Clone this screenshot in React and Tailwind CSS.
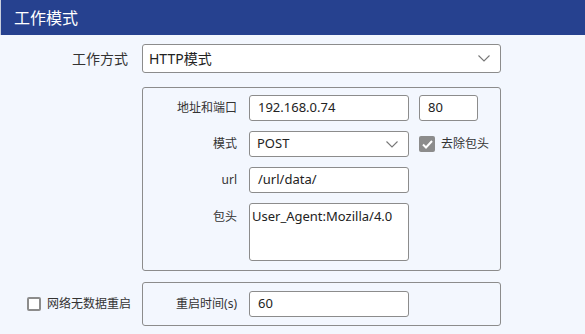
import React from 'react';

const Chevron = () => (
  <svg width="12" height="7" viewBox="0 0 12 7" fill="none" className="shrink-0">
    <path d="M0.5 0.5 L6 6 L11.5 0.5" stroke="#777" strokeWidth="1.1" />
  </svg>
);

const Field = ({ value, className = '' }) => (
  <div className={`flex items-center h-[26px] bg-white border border-[#8c8c8c] rounded-[3px] pl-[8px] text-[13px] text-[#222] ${className}`}>
    {value}
  </div>
);

const Select = ({ value }) => (
  <div className="flex items-center justify-between h-[26px] w-[160px] bg-white border border-[#8c8c8c] rounded-[3px] pl-[7px] pr-[10px] text-[13px] text-[#222]">
    <span>{value}</span>
    <Chevron />
  </div>
);

const Row = ({ label, children, top = false }) => (
  <div className={`flex ${top ? 'items-start' : 'items-center'}`}>
    <div className={`w-[94px] text-right text-[12px] text-[#333] ${top ? 'pt-[5px]' : ''}`}>{label}</div>
    <div className="ml-[12px] flex items-center gap-[10px]">{children}</div>
  </div>
);

export default function App() {
  return (
    <div
      className="w-[585px] h-[334px] bg-[#f3f7fe] overflow-hidden"
      style={{ fontFamily: '"Noto Sans", "Noto Sans CJK SC", sans-serif' }}
    >
      {/* Header */}
      <div className="h-[35px] bg-[#26418f] border-l border-[#c8cede] flex items-center pl-[13px] text-white text-[16px]">
        工作模式
      </div>

      {/* 工作方式 */}
      <div className="flex items-center mt-[9px]">
        <div className="w-[128px] text-right text-[14px] text-[#333]">工作方式</div>
        <div className="ml-[14px] flex items-center justify-between w-[359px] h-[29px] bg-white border border-[#8c8c8c] rounded-[3px] pl-[6px] pr-[10px] text-[14px] text-[#222]">
          <span>HTTP模式</span>
          <Chevron />
        </div>
      </div>

      {/* HTTP settings */}
      <div className="ml-[142px] mt-[14px] w-[359px] border border-[#8c8c8c] rounded-[3px] pt-[7px] pb-[9px] flex flex-col gap-[10px]">
        <Row label="地址和端口">
          <Field value="192.168.0.74" className="w-[160px]" />
          <Field value="80" className="w-[59px] pl-[3px]" />
        </Row>
        <Row label="模式">
          <Select value="POST" />
          <div className="flex items-center gap-[6px]">
            <div className="w-[16px] h-[16px] rounded-[2px] bg-[#8c8c8c] flex items-center justify-center">
              <svg width="11" height="9" viewBox="0 0 11 9" fill="none">
                <path d="M1 4.5 L4 7.5 L10 1" stroke="white" strokeWidth="2" />
              </svg>
            </div>
            <span className="text-[12px] text-[#333]">去除包头</span>
          </div>
        </Row>
        <Row label="url">
          <Field value="/url/data/" className="w-[160px]" />
        </Row>
        <Row label="包头" top>
          <div className="w-[160px] h-[58px] bg-white border border-[#8c8c8c] rounded-[3px] pl-[2px] pt-[3px] text-[13px] text-[#222] leading-[18px]">
            User_Agent:Mozilla/4.0
          </div>
        </Row>
      </div>

      {/* restart */}
      <div className="flex items-center mt-[11px]">
        <div className="w-[142px] flex items-center pl-[27px] gap-[6px]">
          <div className="w-[14px] h-[14px] border-2 border-[#8c8c8c] rounded-[2px] bg-white" />
          <span className="text-[12px] text-[#333]">网络无数据重启</span>
        </div>
        <div className="w-[359px] h-[44px] border border-[#8c8c8c] rounded-[3px] flex items-center">
          <Row label="重启时间(s)">
            <Field value="60" className="w-[160px]" />
          </Row>
        </div>
      </div>
    </div>
  );
}
